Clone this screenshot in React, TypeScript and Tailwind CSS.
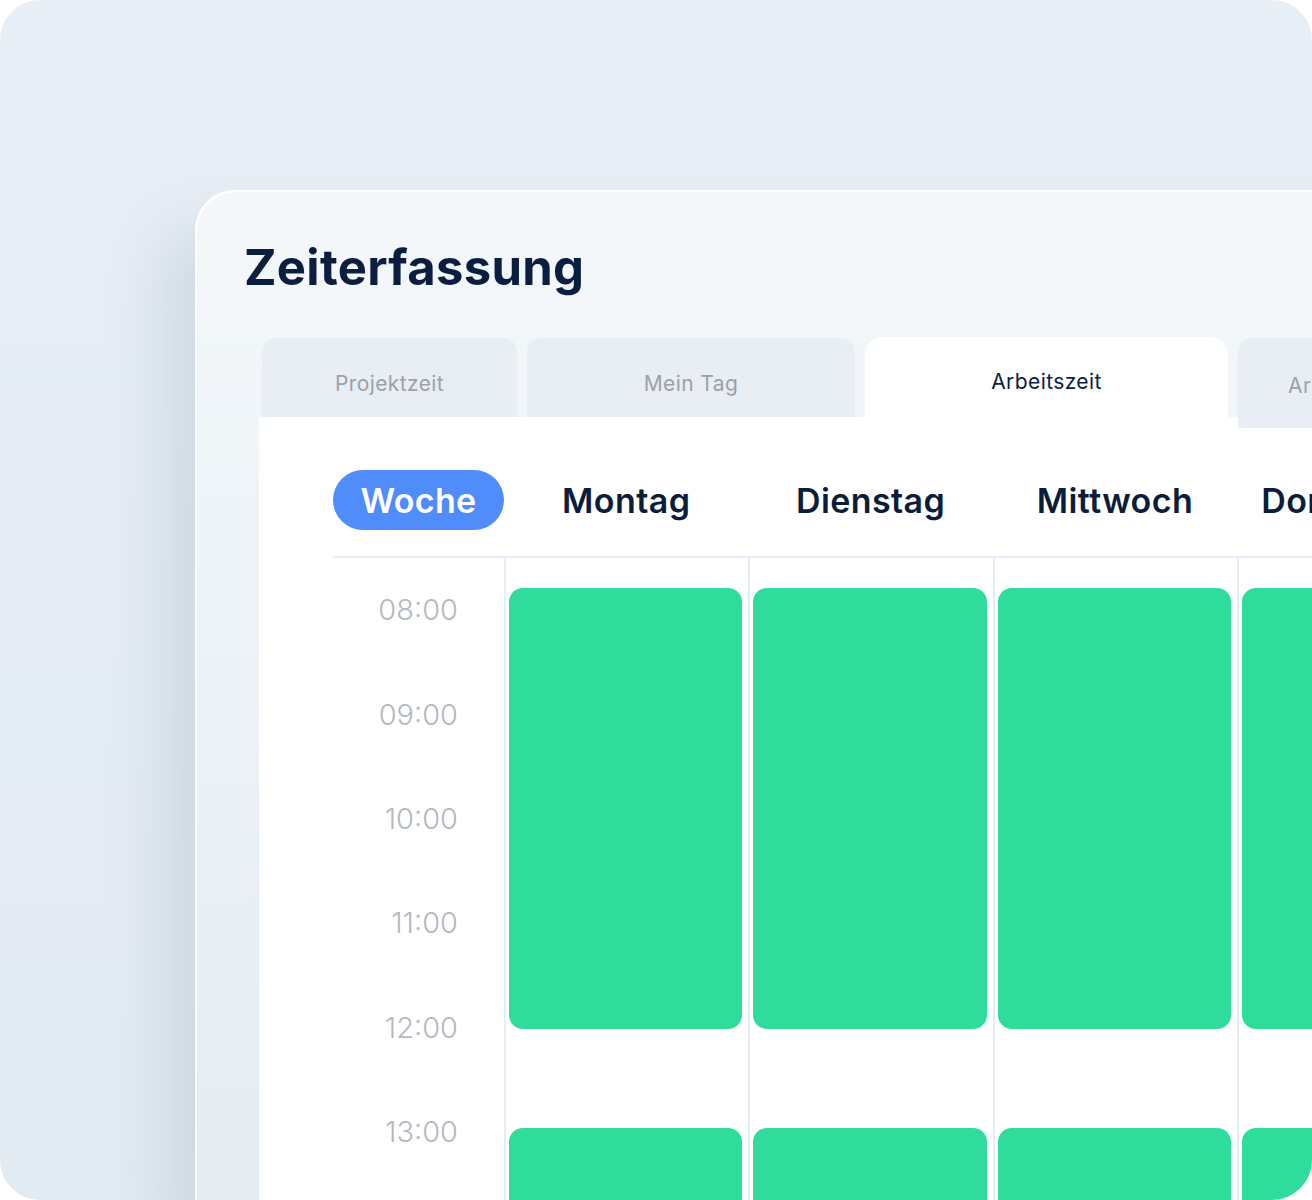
import React from "react";

const times = ["08:00", "09:00", "10:00", "11:00", "12:00", "13:00", "14:00"];
const days = ["Montag", "Dienstag", "Mittwoch", "Donnerstag", "Freitag"];

export default function App() {
  return (
    <div className="min-h-screen bg-white">
      <div className="w-[1312px] h-[1200px] rounded-[40px] overflow-hidden bg-gradient-to-b from-[#e7eef5] to-[#e3ebf2] pt-[190px] pl-[195px] font-['Inter',sans-serif]">
        <div className="h-full w-[1200px] rounded-tl-[40px] border-l-2 border-t-2 border-white bg-gradient-to-b from-[#f4f8fb] to-[#e4ecf2] shadow-[-30px_40px_60px_rgba(110,140,165,0.2)] flex flex-col">
          <h1 className="ml-[47px] mt-[51px] text-[49px] leading-none font-bold tracking-[0.3px] text-[#0c1e3f]">
            Zeiterfassung
          </h1>
          <div className="mt-[45px] ml-[65px] flex items-start gap-[10px]">
            <div className="shrink-0 mt-[1px] h-[79px] w-[255px] rounded-t-[14px] bg-[#e8eef4] flex items-center justify-center pt-[12px] text-[21px] tracking-[0.4px] text-[#9ca1a8]">
              Projektzeit
            </div>
            <div className="shrink-0 mt-[1px] h-[79px] w-[328px] rounded-t-[14px] bg-[#e8eef4] flex items-center justify-center pt-[12px] text-[21px] tracking-[0.4px] text-[#9ca1a8]">
              Mein Tag
            </div>
            <div className="shrink-0 h-[80px] w-[363px] rounded-t-[18px] bg-white flex items-center justify-center pt-[10px] text-[21px] tracking-[0.4px] text-[#0c1e3f]">
              Arbeitszeit
            </div>
            <div className="shrink-0 relative z-10 mt-[1px] -mb-[11px] h-[90px] w-[170px] rounded-t-[14px] bg-[#e8eef4] flex items-start pl-[50px] pt-[32px] text-[21px] tracking-[0.4px] text-[#9ca1a8] whitespace-nowrap">
              Arbeitsplan
            </div>
          </div>
          <div className="ml-[62px] flex-1 bg-white pl-[74px] pt-[53px]">
            <div className="flex items-center h-[60px]">
              <div className="w-[171px] h-[60px] shrink-0 rounded-full bg-[#508cfb] flex items-center justify-center text-[34px] font-semibold tracking-[0.3px] text-white">
                Woche
              </div>
              {days.map((d) => (
                <div
                  key={d}
                  className="w-[244.4px] shrink-0 text-center text-[34px] font-semibold tracking-[0.4px] text-[#0b1d3a] whitespace-nowrap"
                >
                  {d}
                </div>
              ))}
            </div>
            <div className="mt-[26px] h-[2px] w-[1100px] bg-[#e3eef9]" />
            <div className="flex">
              <div className="w-[171px] shrink-0 flex flex-col">
                {times.map((t) => (
                  <div
                    key={t}
                    className="shrink-0 h-[104.3px] flex items-center justify-end pr-[46px] text-[29px] font-light text-[#b5b8bf]"
                  >
                    {t}
                  </div>
                ))}
              </div>
              {days.map((d) => (
                <div
                  key={d}
                  className="w-[244.4px] h-[800px] shrink-0 border-l-2 border-[#e3eef9] pl-[3px] pr-[6px] pt-[30px] flex flex-col"
                >
                  <div className="shrink-0 h-[441px] rounded-[14px] bg-[#2fdc9c]" />
                  <div className="shrink-0 mt-[99px] h-[200px] rounded-[14px] bg-[#2fdc9c]" />
                </div>
              ))}
            </div>
          </div>
        </div>
      </div>
    </div>
  );
}
